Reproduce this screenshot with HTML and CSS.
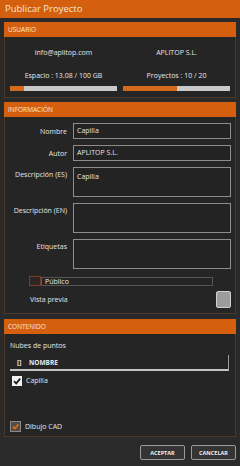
FILE: index.html
```html
<!DOCTYPE html>
<html lang="es">
<head>
    <meta charset="UTF-8">
    <meta name="viewport" content="width=device-width, initial-scale=1.0">
    <title>Publicar Proyecto</title>
    <link rel="stylesheet" href="styles.css">
</head>
<body>
    <div class="window">
        <div class="titlebar">Publicar Proyecto</div>

        <div class="main">
            <section class="panel">
                <h2 class="panel-head">USUARIO</h2>
                <div class="panel-body user-grid">
                    <div class="user-cell">
                        <div class="user-line">info@aplitop.com</div>
                        <div class="user-line">Espacio : 13.08 / 100 GB</div>
                        <div class="bar"><div class="bar-fill" style="width: 13%"></div></div>
                    </div>
                    <div class="user-cell">
                        <div class="user-line">APLITOP S.L.</div>
                        <div class="user-line">Proyectos : 10 / 20</div>
                        <div class="bar"><div class="bar-fill" style="width: 50%"></div></div>
                    </div>
                </div>
            </section>

            <section class="panel panel-info">
                <h2 class="panel-head">INFORMACIÓN</h2>
                <div class="panel-body info-body">
                    <div class="form-grid">
                        <label class="field-label">Nombre</label>
                        <div class="field">Capilla</div>

                        <label class="field-label">Autor</label>
                        <div class="field">APLITOP S.L.</div>

                        <label class="field-label top">Descripción (ES)</label>
                        <div class="field area">Capilla</div>

                        <label class="field-label top">Descripción (EN)</label>
                        <div class="field area"></div>

                        <label class="field-label top">Etiquetas</label>
                        <div class="field area"></div>
                    </div>

                    <div class="public-row">
                        <span class="check check-public"></span>
                        <span class="public-box">Público</span>
                    </div>

                    <div class="preview-row">
                        <span>Vista previa</span>
                        <span class="preview-btn"></span>
                    </div>
                </div>
            </section>

            <section class="panel panel-content">
                <h2 class="panel-head">CONTENIDO</h2>
                <div class="panel-body content-body">
                    <div class="content-title">Nubes de puntos</div>
                    <div class="table-head">
                        <span class="col-check">[]</span>
                        <span class="col-name">NOMBRE</span>
                    </div>
                    <div class="table-row">
                        <span class="check check-white">
                            <svg viewBox="0 0 10 10" width="10" height="10"><path d="M2 5.2 L4.2 7.4 L8.2 2.6" fill="none" stroke="#1c1c1c" stroke-width="1.8"/></svg>
                        </span>
                        <span>Capilla</span>
                    </div>
                    <div class="spacer"></div>
                    <div class="cad-row">
                        <span class="check check-cad">
                            <svg viewBox="0 0 10 10" width="9" height="9"><path d="M2 5.2 L4.2 7.4 L8.2 2.6" fill="none" stroke="#d9731f" stroke-width="1.8"/></svg>
                        </span>
                        <span>Dibujo CAD</span>
                    </div>
                </div>
            </section>

            <div class="actions">
                <button class="btn">ACEPTAR</button>
                <button class="btn">CANCELAR</button>
            </div>
        </div>
    </div>
</body>
</html>
```

FILE: styles.css
```css
body {
    margin: 0;
    background-color: #2a2a2a;
    font-family: "Open Sans", sans-serif;
    font-size: 7px;
    color: #e6e6e6;
}

.window {
    width: 240px;
    height: 466px;
    display: flex;
    flex-direction: column;
    background-color: #2a2a2a;
}

.titlebar {
    height: 18px;
    line-height: 18px;
    padding-left: 5px;
    background-color: #d4600f;
    color: #f3e4d6;
    font-size: 9.5px;
}

.main {
    flex: 1;
    display: flex;
    flex-direction: column;
    padding: 4px 4px 0;
}

.panel {
    display: flex;
    flex-direction: column;
    background-color: #252525;
}

.panel-head {
    margin: 0;
    height: 15px;
    line-height: 15px;
    padding-left: 4px;
    background-color: #d4600f;
    color: #f6e8dc;
    font-size: 6.5px;
    font-weight: normal;
}

.panel-body {
    border: 1px solid #4b3a2b;
    border-top: none;
}

/* usuario */
.user-grid {
    display: grid;
    grid-template-columns: 107px 107px;
    column-gap: 6px;
    padding: 11px 5px 6px;
}

.user-cell {
    display: flex;
    flex-direction: column;
    align-items: center;
}

.user-line {
    height: 10px;
    line-height: 10px;
    margin-bottom: 13px;
}

.user-line + .user-line {
    margin-bottom: 5px;
}

.bar {
    width: 100%;
    height: 5px;
    background-color: #c9c9c9;
}

.bar-fill {
    height: 100%;
    background-color: #d66a1c;
}

/* informacion */
.panel-info {
    margin-top: 4px;
}

.info-body {
    padding: 6px 4px 5px 5px;
}

.form-grid {
    display: grid;
    grid-template-columns: 57px 1fr;
    column-gap: 6px;
    row-gap: 6px;
}

.field-label {
    display: flex;
    align-items: center;
    justify-content: flex-end;
}

.field-label.top {
    align-items: flex-start;
    padding-top: 3px;
}

.field {
    height: 16px;
    box-sizing: border-box;
    border: 1px solid #8c8c8c;
    background-color: #232323;
    padding: 0 3px;
    line-height: 14px;
}

.field.area {
    height: 30px;
    padding-top: 2px;
}

.public-row {
    display: flex;
    align-items: center;
    margin-top: 7px;
    padding-left: 19px;
    height: 10px;
}

.check {
    display: inline-flex;
    align-items: center;
    justify-content: center;
    box-sizing: border-box;
}

.check-public {
    width: 12px;
    height: 10px;
    border: 1px solid #7c3a2a;
    background-color: #2c2626;
}

.public-box {
    width: 172px;
    height: 9px;
    box-sizing: border-box;
    border: 1px solid #555555;
    line-height: 7px;
    padding-left: 3px;
}

.preview-row {
    display: flex;
    align-items: center;
    justify-content: space-between;
    margin-top: 5px;
    padding-left: 20px;
    height: 17px;
}

.preview-btn {
    width: 15px;
    height: 17px;
    box-sizing: border-box;
    border: 1px solid #d0d0d0;
    border-radius: 2px;
    background-color: #9c9c9c;
}

/* contenido */
.panel-content {
    margin-top: 5px;
    flex: 0 0 118px;
}

.content-body {
    flex: 1;
    display: flex;
    flex-direction: column;
    padding: 7px 5px 4px;
}

.content-title {
    height: 10px;
    line-height: 10px;
}

.table-head {
    display: flex;
    align-items: center;
    height: 14px;
    margin-top: 4px;
    margin-right: 1px;
    border-bottom: 2px solid #c4c4c4;
    border-right: 1px solid #9a9a9a;
    font-weight: bold;
    font-size: 6.5px;
}

.col-check {
    margin-left: 7px;
    width: 12px;
}

.table-row {
    display: flex;
    align-items: center;
    gap: 4px;
    margin-top: 4px;
    padding-left: 2px;
    height: 11px;
}

.check-white {
    width: 10px;
    height: 10px;
    background-color: #f2f2f2;
}

.spacer {
    flex: 1;
}

.cad-row {
    display: flex;
    align-items: center;
    gap: 4px;
    height: 11px;
}

.check-cad {
    width: 11px;
    height: 11px;
    border: 1px solid #8a8a8a;
    background-color: #5a4a40;
}

.actions {
    display: flex;
    justify-content: flex-end;
    gap: 6px;
    margin-top: 8px;
}

.btn {
    width: 45px;
    height: 15px;
    padding: 0;
    border: 1px solid #9a9a9a;
    border-radius: 2px;
    background-color: #343434;
    color: #f0f0f0;
    font-family: "Open Sans", sans-serif;
    font-size: 5.5px;
    font-weight: bold;
}
```
